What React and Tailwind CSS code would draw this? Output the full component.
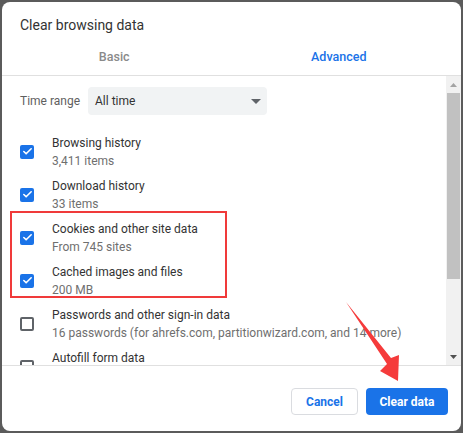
import { Check } from "lucide-react";

const items = [
  { title: "Browsing history", sub: "3,411 items", checked: true },
  { title: "Download history", sub: "33 items", checked: true },
  { title: "Cookies and other site data", sub: "From 745 sites", checked: true },
  { title: "Cached images and files", sub: "200 MB", checked: true },
  { title: "Passwords and other sign-in data", sub: "16 passwords (for ahrefs.com, partitionwizard.com, and 14 more)", checked: false },
  { title: "Autofill form data", sub: "\u00a0", checked: false },
];

// checkbox, blue when ticked
const Box = ({ checked }) =>
  checked ? (
    <div className="w-[14px] h-[14px] rounded-[2px] bg-[#1a73e8] flex items-center justify-center shrink-0">
      <Check className="w-[11px] h-[11px] text-white" strokeWidth={3.5} />
    </div>
  ) : (
    <div className="w-[14px] h-[14px] rounded-[2px] border-2 border-[#5f6368] shrink-0" />
  );

const App = () => {
  return (
    <div className="w-[463px] h-[433px] bg-[#5b5b5b] p-[2px] font-['Roboto',sans-serif]">
      <div className="relative w-[459px] h-[429px] bg-white rounded-[8px] flex flex-col overflow-hidden">
        <div className="pl-[18px] pt-[14px] h-[38px] text-[14px] leading-[18px] text-[#333]">Clear browsing data</div>
        <div className="flex h-[36px] pr-[10px] border-b border-[#e0e0e0] text-[12.5px] font-medium">
          <div className="flex-1 flex items-center justify-center text-[#8a8a8a]">Basic</div>
          <div className="flex-1 flex items-center justify-center text-[#1a73e8]">Advanced</div>
        </div>

        <div className="relative flex h-[290px] border-b border-[#e0e0e0]">
          <div className="flex-1 overflow-hidden pl-[18px] pt-[11px]">
            <div className="flex items-center h-[28px] gap-[8px] text-[12px]">
              <span className="text-[#5f5f5f]">Time range</span>
              <div className="w-[179px] h-[28px] rounded-[4px] bg-[#f1f3f4] flex items-center justify-between pl-[7px] pr-[6px] text-[#333]">
                <span>All time</span>
                <svg width="10" height="5" viewBox="0 0 10 5"><path d="M0 0h10L5 5z" fill="#5f6368" /></svg>
              </div>
            </div>
            <div className="pt-[15px] flex flex-col">
              {items.map((it) => (
                <div key={it.title} className="flex items-center h-[43px] shrink-0">
                  <Box checked={it.checked} />
                  <div className="ml-[18px] flex flex-col text-[12px] leading-[18px] whitespace-nowrap">
                    <span className="text-[#333]">{it.title}</span>
                    <span className="text-[#6f6f6f]">{it.sub}</span>
                  </div>
                </div>
              ))}
            </div>
          </div>
          {/* scrollbar */}
          <div className="w-[15px] bg-[#f1f1f1] flex flex-col items-center">
            <div className="h-[17px] flex items-center justify-center">
              <svg width="7" height="4" viewBox="0 0 7 4"><path d="M0 4h7L3.5 0z" fill="#a3a3a3" /></svg>
            </div>
            <div className="w-[13px] h-[186px] bg-[#c1c1c1]" />
            <div className="flex-1" />
            <div className="h-[17px] flex items-center justify-center">
              <svg width="7" height="4" viewBox="0 0 7 4"><path d="M0 0h7L3.5 4z" fill="#505050" /></svg>
            </div>
          </div>
          {/* annotation box */}
          <div className="absolute left-[8px] top-[135px] w-[217px] h-[87px] border-2 border-[#f03a3a]" />
        </div>

        <div className="flex-1 flex justify-end items-start pt-[22px] pr-[13px] gap-[8px] text-[12px] font-bold">
          <button className="w-[67px] h-[27px] rounded-[4px] border border-[#dadce0] text-[#1a73e8] bg-white">Cancel</button>
          <button className="w-[82px] h-[27px] rounded-[4px] bg-[#1a73e8] text-white">Clear data</button>
        </div>

        {/* annotation arrow */}
        <svg className="absolute left-0 top-0 pointer-events-none" width="459" height="429" viewBox="2 2 459 429">
          <polygon points="346,302 391,358 399,355 398,381 380,371 387,364" fill="#f53b3b" />
        </svg>
      </div>
    </div>
  );
};

export default App;
